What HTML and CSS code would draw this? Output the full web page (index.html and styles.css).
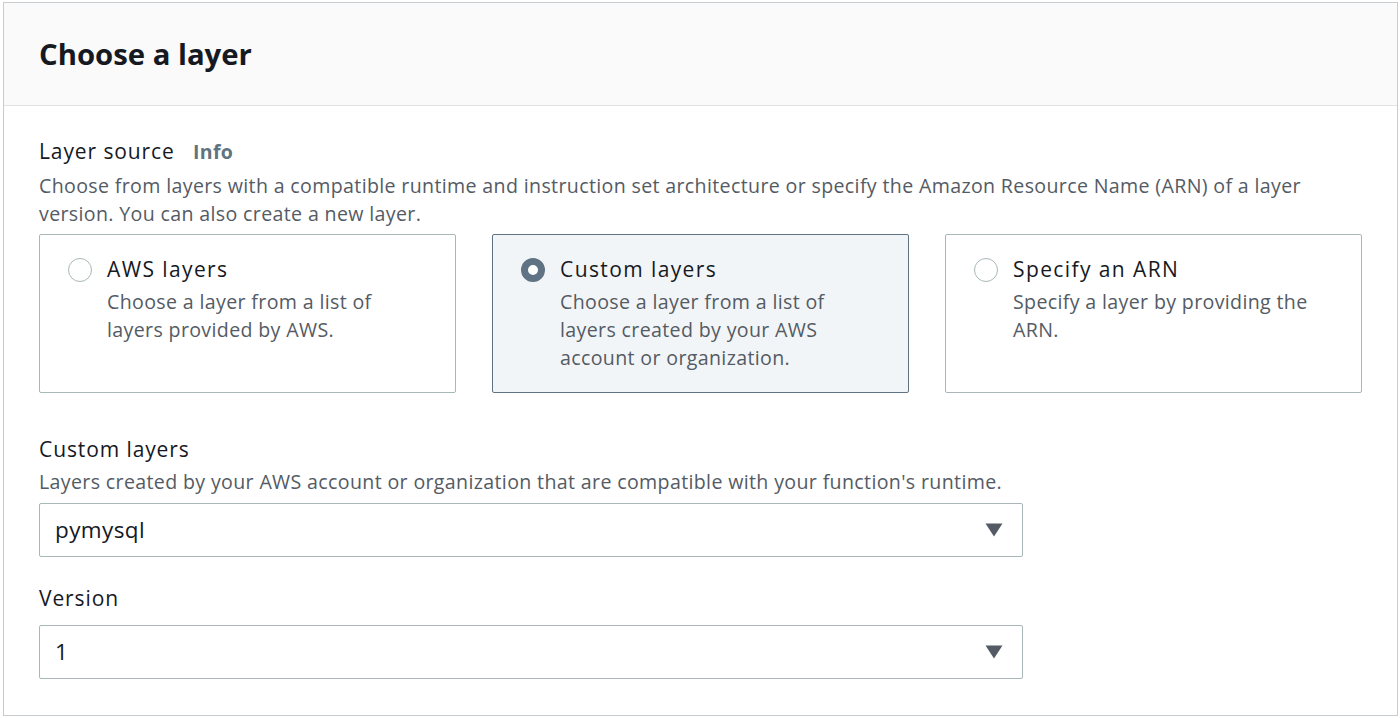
FILE: index.html
```html
<!DOCTYPE html>
<html>
<head>
<meta charset="utf-8">
<link rel="stylesheet" href="styles.css">
</head>
<body>
<div class="panel">
  <div class="panel-header">
    <h2 class="title">Choose a layer</h2>
  </div>
  <div class="panel-body">
    <div class="field-label">Layer source <span class="info">Info</span></div>
    <div class="field-desc">Choose from layers with a compatible runtime and instruction set architecture or specify the Amazon Resource Name (ARN) of a layer version. You can also create a new layer.</div>
    <div class="tiles">
      <div class="tile">
        <span class="radio"></span>
        <div class="tile-text">
          <div class="tile-label">AWS layers</div>
          <div class="tile-desc">Choose a layer from a list of layers provided by AWS.</div>
        </div>
      </div>
      <div class="tile selected">
        <span class="radio checked"></span>
        <div class="tile-text">
          <div class="tile-label">Custom layers</div>
          <div class="tile-desc">Choose a layer from a list of layers created by your AWS account or organization.</div>
        </div>
      </div>
      <div class="tile">
        <span class="radio"></span>
        <div class="tile-text">
          <div class="tile-label">Specify an ARN</div>
          <div class="tile-desc">Specify a layer by providing the ARN.</div>
        </div>
      </div>
    </div>

    <div class="field-label second">Custom layers</div>
    <div class="field-desc single">Layers created by your AWS account or organization that are compatible with your function's runtime.</div>
    <div class="select first">
      <span class="select-value">pymysql</span>
      <svg class="caret" width="18" height="14" viewBox="0 0 18 14"><path d="M0.5 0.5 H17.5 L9 13.5 Z" fill="#545b64"/></svg>
    </div>

    <div class="field-label third">Version</div>
    <div class="select second">
      <span class="select-value">1</span>
      <svg class="caret" width="18" height="14" viewBox="0 0 18 14"><path d="M0.5 0.5 H17.5 L9 13.5 Z" fill="#545b64"/></svg>
    </div>
  </div>
</div>
</body>
</html>
```

FILE: styles.css
```css
html, body {
  margin: 0;
  padding: 0;
  background: #ffffff;
}

body {
  font-family: "Open Sans", "Liberation Sans", sans-serif;
  color: #16191f;
  padding: 2px 2px 2px 3px;
}

.panel {
  border: 1px solid #c6cccf;
  background: #ffffff;
  height: 714px;
  box-sizing: border-box;
}

.panel-header {
  background: #fafafa;
  border-bottom: 1px solid #dfe3e5;
  height: 103px;
  box-sizing: border-box;
  padding: 0 0 0 35px;
  display: flex;
  align-items: center;
}

.title {
  margin: 0;
  font-size: 29.3px;
  font-weight: 700;
  color: #16191f;
}

.panel-body {
  padding: 30px 0 0 35px;
}

.field-label {
  font-size: 21px;
  line-height: 30px;
  letter-spacing: 0.9px;
  color: #16191f;
}

.info {
  font-size: 19.5px;
  font-weight: 700;
  letter-spacing: 0.3px;
  color: #5f7380;
  margin-left: 12px;
}

.field-desc {
  font-size: 19.6px;
  line-height: 27.5px;
  letter-spacing: 0.35px;
  color: #545b64;
  width: 1290px;
  margin-top: 5px;
}

.tiles {
  display: flex;
  gap: 36px;
  margin-top: 7px;
}

.tile {
  width: 417px;
  height: 159px;
  box-sizing: border-box;
  border: 1px solid #aab7b8;
  border-radius: 2px;
  display: flex;
  align-items: flex-start;
  padding: 19px 16px 0 28px;
  background: #ffffff;
}

.tile.selected {
  background: #f2f5f7;
  border-color: #5f7384;
}

.radio {
  width: 24px;
  height: 24px;
  box-sizing: border-box;
  border: 1.5px solid #aab7b8;
  border-radius: 50%;
  background: #ffffff;
  flex: none;
  margin-top: 4px;
}

.radio.checked {
  border: 7px solid #5f7384;
  background: #ffffff;
}

.tile-text {
  margin-left: 15px;
  width: 310px;
}

.tile-label {
  font-size: 21px;
  line-height: 30px;
  letter-spacing: 1.4px;
  color: #16191f;
}

.tile-desc {
  font-size: 19.6px;
  line-height: 28px;
  letter-spacing: 0.35px;
  color: #545b64;
  margin-top: 4px;
}

.field-label.second {
  margin-top: 41px;
}

.field-desc.single {
  margin-top: 4px;
}

.field-label.third {
  margin-top: 26px;
}

.select {
  width: 984px;
  height: 54px;
  box-sizing: border-box;
  border: 1px solid #aab7b8;
  border-radius: 2px;
  display: flex;
  align-items: center;
  justify-content: space-between;
  padding: 0 19px 0 15px;
}

.select.first {
  margin-top: 7px;
}

.select.second {
  margin-top: 12px;
}

.select-value {
  font-size: 22.5px;
  letter-spacing: 0.4px;
  color: #16191f;
}

.caret {
  display: block;
}
```
